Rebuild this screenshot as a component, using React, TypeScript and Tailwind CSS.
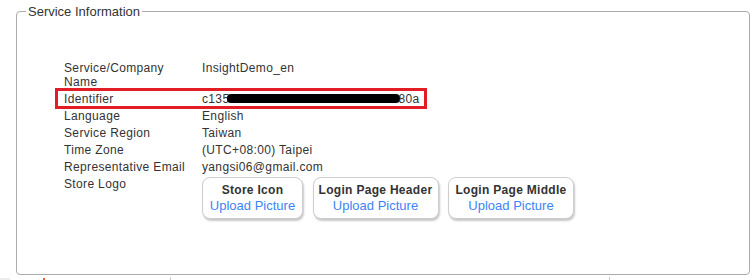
import React from "react";

type Row = { label: string; value: React.ReactNode };

const rows: Row[] = [
  { label: "Service/Company Name", value: "InsightDemo_en" },
  {
    label: "Identifier",
    value: (
      <span className="inline-flex items-center">
        c135
        <span className="inline-block w-[173px] h-[9px] -ml-[2px] -mr-[2px] bg-black rounded-[4px]" />
        80a
      </span>
    ),
  },
  { label: "Language", value: "English" },
  { label: "Service Region", value: "Taiwan" },
  { label: "Time Zone", value: "(UTC+08:00) Taipei" },
  { label: "Representative Email", value: "yangsi06@gmail.com" },
];

const logos = [
  { title: "Store Icon", w: "w-[101px]" },
  { title: "Login Page Header", w: "w-[126px]" },
  { title: "Login Page Middle", w: "w-[126px]" },
];

export default function App() {
  return (
    <div className="relative w-[755px] h-[280px] bg-white overflow-hidden font-['Liberation_Sans',Arial,sans-serif] text-[#333] tracking-[0.35px]">
      <fieldset className="ml-[16px] mt-[4px] w-[734px] h-[271px] border border-[#ababab] rounded-[4px]">
        <legend className="ml-[9px] px-[2px] text-[13px] leading-[15px] tracking-normal text-[#333]">
          Service Information
        </legend>

        <table className="ml-[47px] mt-[40px] border-collapse text-[12px] leading-[14px]">
          <tbody>
            {rows.map((r) => (
              <tr key={r.label}>
                <td className="w-[138px] pr-[10px] py-[1.5px] align-top">{r.label}</td>
                <td className="py-[1.5px] align-top whitespace-nowrap">{r.value}</td>
              </tr>
            ))}
            <tr>
              <td className="py-[1.5px] align-top">Store Logo</td>
              <td className="pb-[1.5px] align-top">
                <div className="flex gap-[9.5px] mt-[1.5px]">
                  {logos.map((l) => (
                    <button
                      key={l.title}
                      className={`${l.w} h-[42px] flex flex-col items-center justify-center bg-white border border-[#cdcdcd] rounded-[8px] shadow-[1px_2px_2px_rgba(0,0,0,0.22)] leading-[15px] tracking-[0.3px]`}
                    >
                      <span className="font-bold text-[#333]">{l.title}</span>
                      <span className="text-[13px] text-[#3d84f7] tracking-normal">Upload Picture</span>
                    </button>
                  ))}
                </div>
              </td>
            </tr>
          </tbody>
        </table>
      </fieldset>

      {/* annotation box around the identifier row */}
      <div className="absolute left-[55px] top-[88px] w-[372px] h-[21px] border-[3px] border-[#e31d25] pointer-events-none" />

      {/* edge of the next section, cut off by the screenshot */}
      <div className="flex items-end h-[5px]">
        <div className="w-[10px] h-[2px] bg-[#ececec]" />
        <div className="ml-[33px] w-[2px] h-[2px] bg-[#e8631d]" />
        <div className="ml-[125px] w-[1px] h-[3px] bg-[#c8c8c8]" />
        <div className="ml-[438px] w-[1px] h-[3px] bg-[#c8c8c8]" />
      </div>
    </div>
  );
}
